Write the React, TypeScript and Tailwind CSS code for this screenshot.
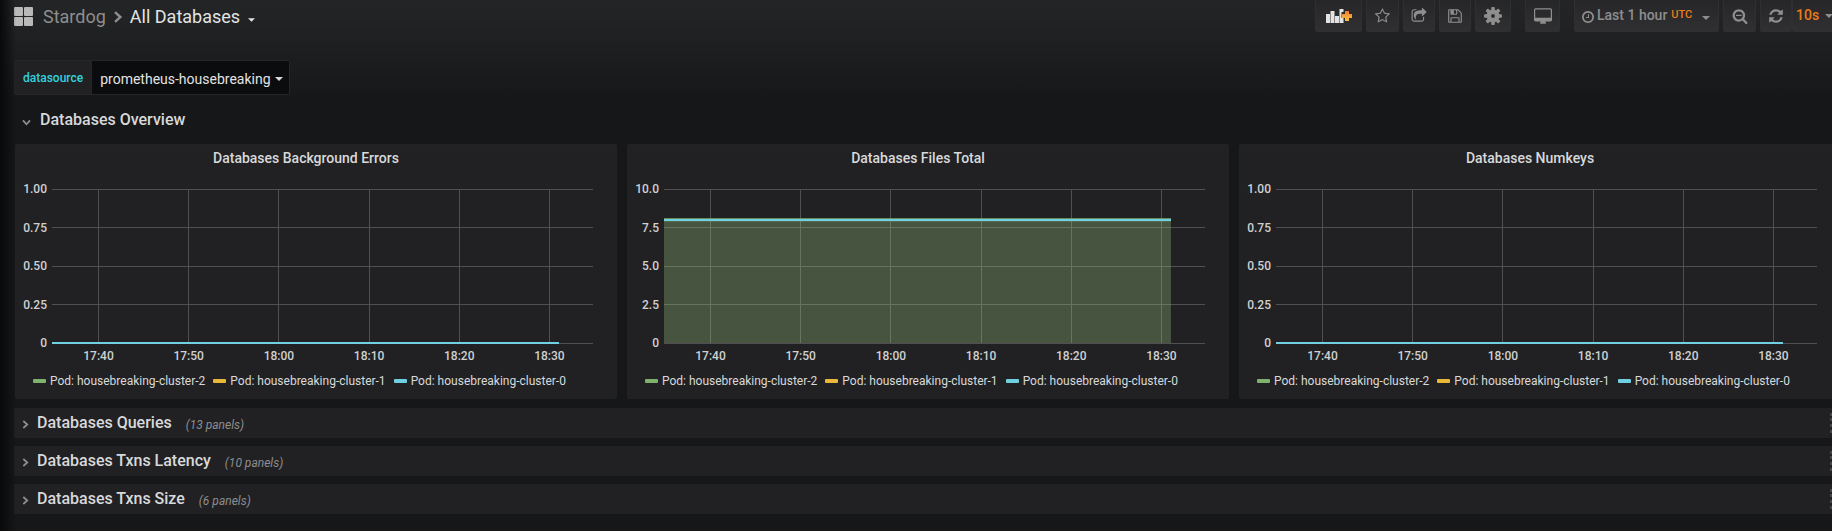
import React from "react";

const PATHS = {
  star: "M1137 1004l306-297-422-62-189-382-189 382-422 62 306 297-73 421 378-199 377 199zm527-357q0 22-26 48l-363 354 86 500q1 7 1 20 0 50-41 50-19 0-40-12l-449-236-449 236q-22 12-40 12-21 0-31.5-14.5t-10.5-35.5q0-6 2-20l86-500-364-354q-25-27-25-48 0-37 56-46l502-73 225-455q19-41 49-41t49 41l225 455 502 73q56 9 56 46z",
  share:
    "M1472 989v259q0 119-84.5 203.5t-203.5 84.5h-832q-119 0-203.5-84.5t-84.5-203.5v-832q0-119 84.5-203.5t203.5-84.5h255q13 0 22.5 9.5t9.5 22.5q0 27-26 32-77 26-133 60-10 4-16 4h-112q-66 0-113 47t-47 113v832q0 66 47 113t113 47h832q66 0 113-47t47-113v-214q0-19 18-29 28-13 54-37 16-16 35-8 21 9 21 29zm237-496l-384 384q-18 19-45 19-12 0-25-5-39-17-39-59v-192h-160q-323 0-438 131-119 137-74 473 3 23-20 34-8 2-12 2-16 0-26-13-10-14-21-31t-39.5-68.5-49.5-99.5-38.5-114-17.5-122q0-49 3.5-91t14-90 28-88 47-81.5 68.5-74 94.5-61.5 124.5-48.5 159.5-30.5 196.5-11h160v-192q0-42 39-59 13-5 25-5 26 0 45 19l384 384q19 19 19 45t-19 45z",
  save: "M512 1536h768v-384h-768v384zm896 0h128v-896q0-14-10-38.5t-20-34.5l-281-281q-10-10-34-20t-39-10v416q0 40-28 68t-68 28h-576q-40 0-68-28t-28-68v-416h-128v1280h128v-416q0-40 28-68t68-28h832q40 0 68 28t28 68v416zm-384-928v-320q0-13-9.5-22.5t-22.5-9.5h-192q-13 0-22.5 9.5t-9.5 22.5v320q0 13 9.5 22.5t22.5 9.5h192q13 0 22.5-9.5t9.5-22.5zm640 32v928q0 40-28 68t-68 28h-1344q-40 0-68-28t-28-68v-1344q0-40 28-68t68-28h928q40 0 88 20t76 48l280 280q28 28 48 76t20 88z",
  desktop:
    "M1728 992v-832q0-13-9.5-22.5t-22.5-9.5h-1600q-13 0-22.5 9.5t-9.5 22.5v832q0 13 9.5 22.5t22.5 9.5h1600q13 0 22.5-9.5t9.5-22.5zm128-832v1088q0 66-47 113t-113 47h-544q0 37 16 77.5t32 71 16 43.5q0 26-19 45t-45 19h-512q-26 0-45-19t-19-45q0-14 16-44t32-70 16-78h-544q-66 0-113-47t-47-113v-1088q0-66 47-113t113-47h1600q66 0 113 47t47 113z",
  clock:
    "M1024 544v448q0 14-9 23t-23 9h-320q-14 0-23-9t-9-23v-64q0-14 9-23t23-9h224v-352q0-14 9-23t23-9h64q14 0 23 9t9 23zm416 352q0-148-73-273t-198-198-273-73-273 73-198 198-73 273 73 273 198 198 273 73 273-73 198-198 73-273zm224 0q0 209-103 385.5t-279.5 279.5-385.5 103-385.5-103-279.5-279.5-103-385.5 103-385.5 279.5-279.5 385.5-103 385.5 103 279.5 279.5 103 385.5z",
  zoomOut:
    "M1088 800v64q0 13-9.5 22.5t-22.5 9.5h-576q-13 0-22.5-9.5t-9.5-22.5v-64q0-13 9.5-22.5t22.5-9.5h576q13 0 22.5 9.5t9.5 22.5zm128 32q0-185-131.5-316.5t-316.5-131.5-316.5 131.5-131.5 316.5 131.5 316.5 316.5 131.5 316.5-131.5 131.5-316.5zm512 832q0 53-37.5 90.5t-90.5 37.5q-54 0-90-38l-343-342q-179 124-399 124-143 0-273.5-55.5t-225-150-150-225-55.5-273.5 55.5-273.5 150-225 225-150 273.5-55.5 273.5 55.5 225 150 150 225 55.5 273.5q0 220-124 399l343 343q37 37 37 90z",
  refresh:
    "M1639 1056q0 5-1 7-64 268-268 434.5t-478 166.5q-146 0-282.5-55t-243.5-157l-129 129q-19 19-45 19t-45-19-19-45v-448q0-26 19-45t45-19h448q26 0 45 19t19 45-19 45l-137 137q71 66 161 102t187 36q134 0 250-65t186-179q11-17 53-117 8-23 30-23h192q13 0 22.5 9.5t9.5 22.5zm25-800v448q0 26-19 45t-45 19h-448q-26 0-45-19t-19-45 19-45l138-138q-148-137-349-137-134 0-250 65t-186 179q-11 17-53 117-8 23-30 23h-199q-13 0-22.5-9.5t-9.5-22.5v-7q65-268 270-434.5t480-166.5q146 0 284 55.5t245 156.5l130-129q19-19 45-19t45 19 19 45z",
};

function Icon({
  name,
  className,
  viewBox = "0 0 1792 1792",
}: {
  name: keyof typeof PATHS;
  className: string;
  viewBox?: string;
}) {
  return (
    <svg viewBox={viewBox} className={className} fill="currentColor" aria-hidden="true">
      <path d={PATHS[name]} />
    </svg>
  );
}

function Caret({ className = "" }: { className?: string }) {
  return (
    <svg viewBox="0 0 8 4" className={className} fill="currentColor" aria-hidden="true">
      <path d="M0 0h8L4 4z" />
    </svg>
  );
}

function Chevron({ className = "" }: { className?: string }) {
  return (
    <svg viewBox="0 0 8 10" className={className} fill="none" stroke="currentColor" strokeWidth="2" aria-hidden="true">
      <path d="M1.5 1l4.500 4-4.500 4" />
    </svg>
  );
}

function Gear() {
  return (
    <svg viewBox="-9 -9 18 18" className="size-[18px]" fill="currentColor" aria-hidden="true">
      <path fillRule="evenodd" d="M0-6.500a6.500 6.500 0 1 1 0 13a6.500 6.500 0 1 1 0-13zM0-1.900a1.900 1.900 0 1 0 0 3.800a1.900 1.900 0 1 0 0-3.800z" />
      {[0, 45, 90, 135, 180, 225, 270, 315].map((a) => (
        <rect key={a} x="-1.800" y="-9" width="3.600" height="4" rx="1" transform={`rotate(${a})`} />
      ))}
    </svg>
  );
}

function AddPanelIcon() {
  return (
    <svg viewBox="0 0 26 14" className="h-3.5 w-[26px]" aria-hidden="true">
      <defs>
        <linearGradient id="plus" x1="0" y1="0" x2="0" y2="1">
          <stop offset="0" stopColor="#f0782a" />
          <stop offset="0.500" stopColor="#f9a03a" />
          <stop offset="1" stopColor="#f7c534" />
        </linearGradient>
      </defs>
      <path fill="#e3e3e3" d="M0 5h4v9H0zM4.500 2h4v12h-4zM9 7h4v7H9zM13.500 0h4v3h-2v6h2v5h-4z" />
      <path fill="url(#plus)" d="M19 2h4v3h3v4h-3v3h-4V9h-3V5h3z" />
    </svg>
  );
}

const BTN =
  "flex h-8 shrink-0 items-center rounded-b-xs border border-t-0 border-[#2f2f32] bg-linear-to-b from-[#262628] to-[#303032] text-[#8e8e8e]";

function Header() {
  return (
    <header className="flex items-start justify-between pl-3.5">
      <nav className="flex h-[33px] items-center text-[18px]" aria-label="Breadcrumb">
        <svg viewBox="0 0 19 19" className="mr-2.5 size-[19px]" fill="#b9b9b9" aria-hidden="true">
          <rect width="9" height="9" rx="1" />
          <rect x="10" width="9" height="9" rx="1" />
          <rect y="10" width="9" height="9" rx="1" />
          <rect x="10" y="10" width="9" height="9" rx="1" />
        </svg>
        <a href="#stardog" className="text-[#8e8e8e]">Stardog</a>
        <Chevron className="mx-[7px] h-3 w-2.5 text-[#8e8e8e]" />
        <a href="#all" className="flex items-center text-[#e3e3e3]">
          All Databases
          <Caret className="mt-1.5 ml-2 h-1 w-[7px]" />
        </a>
      </nav>
      <div className="-mr-4 flex gap-1">
        <button aria-label="Add panel" className={`${BTN} w-[47px] justify-center`}><AddPanelIcon /></button>
        <button aria-label="Star" className={`${BTN} w-[33px] justify-center`}><Icon name="star" className="size-4" /></button>
        <button aria-label="Share" className={`${BTN} w-8 justify-center`}><Icon name="share" className="size-4" /></button>
        <button aria-label="Save" className={`${BTN} w-8 justify-center`}><Icon name="save" className="size-4" /></button>
        <button aria-label="Settings" className={`${BTN} w-9 justify-center`}><Gear /></button>
        <button aria-label="Kiosk mode" className={`${BTN} ml-2.5 w-[35px] justify-center`}>
          <Icon name="desktop" className="h-4 w-[18px]" viewBox="-64 0 1920 1664" />
        </button>
        <button className={`${BTN} ml-2.5 w-[145px] pl-1.5 text-[14px] font-medium`}>
          <Icon name="clock" className="mt-0.5 mr-0.5 size-3.5" />
          Last 1 hour
          <span className="ml-1 text-[11px] text-[#eb7b18]">UTC</span>
          <Caret className="mt-1 ml-2.5 h-1 w-2" />
        </button>
        <button aria-label="Zoom out" className={`${BTN} w-[33px] justify-center`}><Icon name="zoomOut" className="size-4" /></button>
        <div className="flex">
          <button aria-label="Refresh" className={`${BTN} w-8 justify-center`}><Icon name="refresh" className="size-4" /></button>
          <button className={`${BTN} w-14 pl-[3px] text-[14px] font-medium`}>
            <span className="text-[#eb7b18]">10s</span>
            <Caret className="ml-1.5 h-1 w-2" />
          </button>
        </div>
      </div>
    </header>
  );
}

const TIMES = ["17:40", "17:50", "18:00", "18:10", "18:20", "18:30"];
const SERIES = [
  { name: "Pod: housebreaking-cluster-2", color: "#7eb26d" },
  { name: "Pod: housebreaking-cluster-1", color: "#eab839" },
  { name: "Pod: housebreaking-cluster-0", color: "#6ed0e0" },
];

function Graph({ title, ticks, level }: { title: string; ticks: string[]; level: number }) {
  const end = "93.7%";
  const top = `${100 - level * 100}%`;
  return (
    <section className="min-w-0 flex-1 rounded-xs border border-[#222225] bg-[#212124] pt-1 pb-2">
      <h2 className="pr-5 text-center text-[14px] leading-[18px] font-medium">{title}</h2>
      <div className="mt-[22px] pr-[23px] pl-9">
        <svg className="block h-[154px] w-full overflow-visible text-[12px] font-medium" fill="#d0d1d2" role="img" aria-label={title}>
          {ticks.map((t, i) => (
            <g key={t}>
              <line x1="0" x2="100%" y1={`${i * 25}%`} y2={`${i * 25}%`} stroke="#505052" shapeRendering="crispEdges" />
              <text x="-5" y={`${i * 25}%`} dy="4" textAnchor="end">{t}</text>
            </g>
          ))}
          {TIMES.map((t, i) => (
            <g key={t}>
              <line x1={`${8.6 + i * 16.67}%`} x2={`${8.6 + i * 16.67}%`} y1="0" y2="100%" stroke="#505052" shapeRendering="crispEdges" />
              <text x={`${8.6 + i * 16.67}%`} y="100%" dy="17" textAnchor="middle">{t}</text>
            </g>
          ))}
          {level > 0 && (
            <>
              <rect x="0" y={top} width={end} height={`${level * 100}%`} fill="#9fce80" fillOpacity="0.300" />
              <line x1="0" x2={end} y1={top} y2={top} stroke="#7eb26d" strokeWidth="3" />
            </>
          )}
          <line x1="0" x2={end} y1={top} y2={top} stroke="#6ed0e0" strokeWidth="2" shapeRendering="crispEdges" />
        </svg>
      </div>
      <ul className="mt-[29px] flex gap-2 pl-[17px] text-[12px] leading-[18px] whitespace-nowrap">
        {SERIES.map((s) => (
          <li key={s.name} className="flex items-center gap-1">
            <span className="h-1 w-[13px] rounded-[1px]" style={{ backgroundColor: s.color }} />
            {s.name}
          </li>
        ))}
      </ul>
    </section>
  );
}

function Row({ title, count }: { title: string; count: number }) {
  return (
    <div className="-ml-px flex h-[30px] items-center justify-between bg-[#212124] pl-2">
      <button className="flex items-center">
        <Chevron className="mt-0.5 mr-2 h-[9px] w-[7px] text-[#8e8e8e]" />
        <span className="text-[16px] font-medium">{title}</span>
        <span className="mt-1 ml-3.5 text-[12px] text-[#8e8e8e] italic">({count} panels)</span>
      </button>
      <svg className="h-5 w-[11px]" viewBox="0 0 11 20" fill="#464648" aria-hidden="true">
        {[0, 5, 11, 17].map((y) => (
          <path key={y} d={`M0 ${y}h3v3h-3zM6 ${y}h3v3h-3z`} />
        ))}
      </svg>
    </div>
  );
}

export default function App() {
  return (
    <div className="relative min-h-screen overflow-hidden bg-[#161719] bg-[linear-gradient(180deg,#222426_10px,#161719_100px)] font-['Roboto',sans-serif] text-[#d8d9da]">
      <div className="pointer-events-none absolute inset-y-0 left-0 w-4 bg-linear-to-r from-[#08090a] to-transparent" />
      <Header />
      <main className="-mr-[9px] pl-[15px]">
        <form className="-ml-px mt-[27px] flex h-[35px]">
          <label htmlFor="datasource" className="flex items-center rounded-l-xs border border-r-0 border-[#262628] bg-[#212124] px-2 text-[12px] font-medium text-[#32d1df]">
            datasource
          </label>
          <div className="relative">
            <select id="datasource" className="h-full appearance-none rounded-r-xs border border-[#262628] bg-[#0b0c0e] pt-1 pr-[18px] pl-2 text-[14px] text-[#e3e3e3]">
              <option>prometheus-housebreaking</option>
            </select>
            <Caret className="pointer-events-none absolute top-[17px] right-[7px] h-1 w-2" />
          </div>
        </form>
        <button className="mt-[15px] flex h-5 items-center pl-2">
          <Chevron className="mt-1 mr-2.5 h-[9px] w-[7px] rotate-90 text-[#8e8e8e]" />
          <span className="text-[16px] font-medium">Databases Overview</span>
        </button>
        <div className="mt-3.5 flex gap-2.5">
          <Graph title="Databases Background Errors" ticks={["1.00", "0.75", "0.50", "0.25", "0"]} level={0} />
          <Graph title="Databases Files Total" ticks={["10.0", "7.5", "5.0", "2.5", "0"]} level={0.8} />
          <Graph title="Databases Numkeys" ticks={["1.00", "0.75", "0.50", "0.25", "0"]} level={0} />
        </div>
        <div className="mt-[9px] flex flex-col gap-2">
          <Row title="Databases Queries" count={13} />
          <Row title="Databases Txns Latency" count={10} />
          <Row title="Databases Txns Size" count={6} />
        </div>
      </main>
    </div>
  );
}
